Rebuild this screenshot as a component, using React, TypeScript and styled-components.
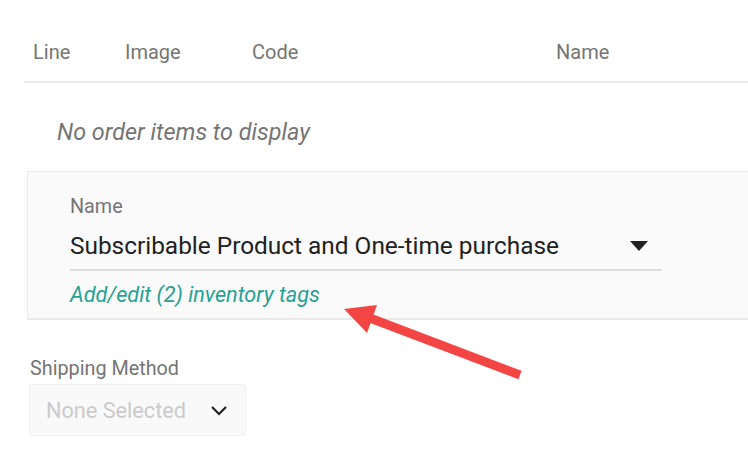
import styled, { createGlobalStyle } from "styled-components";

const GlobalStyle = createGlobalStyle`
	html, body {
		margin: 0;
		padding: 0;
		background: #ffffff;
		font-family: Roboto, "Noto Sans", "Liberation Sans", sans-serif;
	}
`;

const Page = styled("div")`
	position: relative;
	width: 748px;
	height: 455px;
	overflow: hidden;
	background: #ffffff;
`;

const Table = styled("div")`
	margin-left: 24px;
	padding-top: 39px;
`;

const HeaderRow = styled("div")`
	display: flex;
	height: 44px;
	border-bottom: 2px solid #ececec;
	box-sizing: border-box;
`;

const HeaderCell = styled("div")<{ $width: number }>`
	width: ${({ $width }) => $width}px;
	padding-left: 9px;
	box-sizing: border-box;
	font-size: 20px;
	line-height: 26px;
	color: #757575;
	flex-shrink: 0;
`;

const EmptyText = styled("div")`
	padding: 35px 0 0 33px;
	height: 88px;
	box-sizing: border-box;
	font-size: 23.4px;
	line-height: 28px;
	font-style: italic;
	color: #757575;
`;

const Panel = styled("div")`
	margin-left: 27px;
	height: 149px;
	box-sizing: border-box;
	background: #fafafa;
	border: 1px solid #e9e9e9;
	border-right: none;
	border-bottom-width: 2px;
	padding: 23px 0 0 42px;
`;

const FieldLabel = styled("div")`
	font-size: 19.8px;
	line-height: 24px;
	color: #757575;
`;

const SelectLine = styled("div")`
	display: flex;
	align-items: center;
	justify-content: space-between;
	width: 592px;
	height: 52px;
	box-sizing: border-box;
	padding: 3px 14px 0 0;
	border-bottom: 2px solid #dedede;
	font-size: 24.4px;
	color: #212121;
`;

const TagsLink = styled("a")`
	display: block;
	margin-top: 11px;
	font-size: 21.7px;
	line-height: 26px;
	font-style: italic;
	color: #26a193;
	text-decoration: none;
`;

const Shipping = styled("div")`
	padding: 37px 0 0 30px;
`;

const ShippingBox = styled("div")`
	display: flex;
	align-items: center;
	justify-content: space-between;
	margin-top: 3px;
	margin-left: -1px;
	width: 217px;
	height: 52px;
	box-sizing: border-box;
	padding: 0 17px 0 16px;
	background: #f9f9f9;
	border: 1px solid #f0f0f0;
	border-radius: 3px;
	font-size: 21.7px;
	color: #cbcbcb;
`;

const Arrow = styled("svg")`
	position: absolute;
	left: 0;
	top: 0;
	pointer-events: none;
`;

const columns = [
	{ label: "Line", width: 92 },
	{ label: "Image", width: 127 },
	{ label: "Code", width: 304 },
	{ label: "Name", width: 150 },
];

const App = () => {
	return (
		<>
			<GlobalStyle />
			<Page>
				<Table>
					<HeaderRow>
						{columns.map((col) => (
							<HeaderCell key={col.label} $width={col.width}>
								{col.label}
							</HeaderCell>
						))}
					</HeaderRow>
					<EmptyText>No order items to display</EmptyText>
				</Table>
				<Panel>
					<FieldLabel>Name</FieldLabel>
					<SelectLine>
						<span>Subscribable Product and One-time purchase</span>
						<svg width="18" height="10" viewBox="0 0 18 10">
							<path d="M0 0 H18 L9 10 Z" fill="#222" />
						</svg>
					</SelectLine>
					<TagsLink href="#">Add/edit (2) inventory tags</TagsLink>
				</Panel>
				<Shipping>
					<FieldLabel>Shipping Method</FieldLabel>
					<ShippingBox>
						<span>None Selected</span>
						<svg width="18" height="11" viewBox="0 0 18 11">
							<path d="M2 2 L9 9 L16 2" fill="none" stroke="#222" strokeWidth="2.2" />
						</svg>
					</ShippingBox>
				</Shipping>
				<Arrow width="748" height="455" viewBox="0 0 748 455">
					<line x1="520" y1="375" x2="362" y2="315" stroke="#f44545" strokeWidth="9" />
					<path d="M344 309 L377 305 L367 333 Z" fill="#f44545" />
				</Arrow>
			</Page>
		</>
	);
};

export default App;
